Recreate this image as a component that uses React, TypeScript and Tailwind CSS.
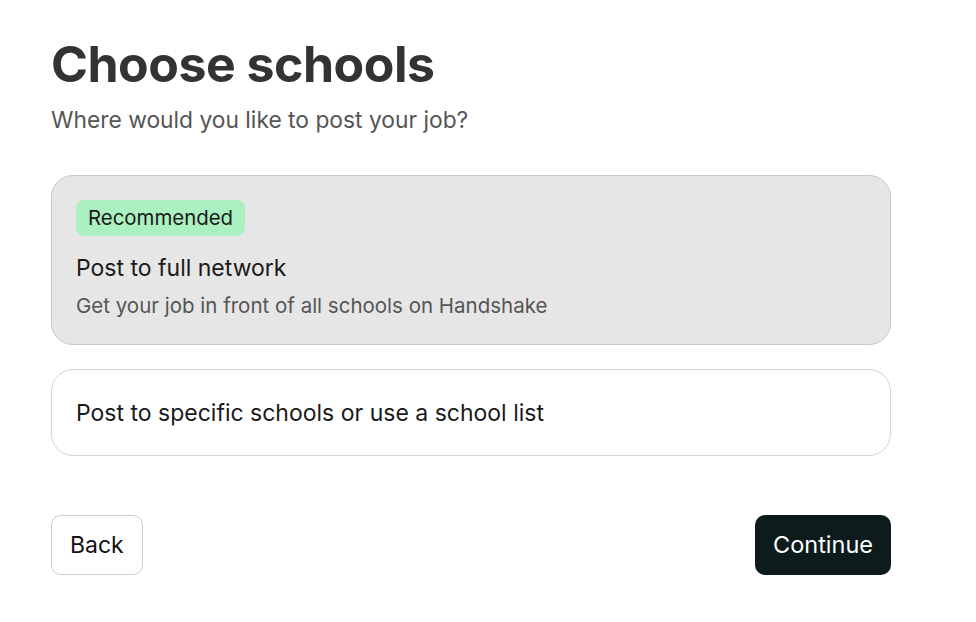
import React from "react";

export default function App() {
  return (
    <div className="min-h-screen bg-white font-['Inter',sans-serif] text-[#333]">
      <div className="w-[840px] ml-[51px] pt-[36px]">
        <h1 className="text-[50px] leading-[56px] font-bold tracking-[-0.5px] text-[#333]">Choose schools</h1>
        <p className="mt-[14px] text-[22.8px] leading-[28px] text-[#555]">Where would you like to post your job?</p>
        <div className="mt-[41px] flex flex-col gap-[24px]">
          <div className="rounded-[22px] border border-[#c8c8c8] bg-[#e6e6e6] px-[24px] pt-[24px] pb-[24px]">
            <span className="inline-block rounded-[8px] bg-[#aaf0c0] px-[12px] py-[5px] text-[20.4px] leading-[26px] text-[#1a1a1a]">Recommended</span>
            <div className="mt-[17px] text-[23px] leading-[30px] text-[#1a1a1a]">Post to full network</div>
            <div className="mt-[9px] text-[20.5px] leading-[28px] text-[#555]">Get your job in front of all schools on Handshake</div>
          </div>
          <div className="rounded-[22px] border border-[#d4d4d4] bg-white px-[24px] pt-[28px] pb-[27px]">
            <div className="text-[23px] leading-[30px] text-[#1a1a1a]">Post to specific schools or use a school list</div>
          </div>
        </div>
        <div className="mt-[59px] flex justify-between">
          <button className="h-[60px] rounded-[10px] border border-[#cccccc] bg-white px-[18px] text-[23px] text-[#111]">Back</button>
          <button className="h-[60px] rounded-[10px] bg-[#0d1b1c] px-[18px] text-[23.5px] text-white">Continue</button>
        </div>
      </div>
    </div>
  );
}
